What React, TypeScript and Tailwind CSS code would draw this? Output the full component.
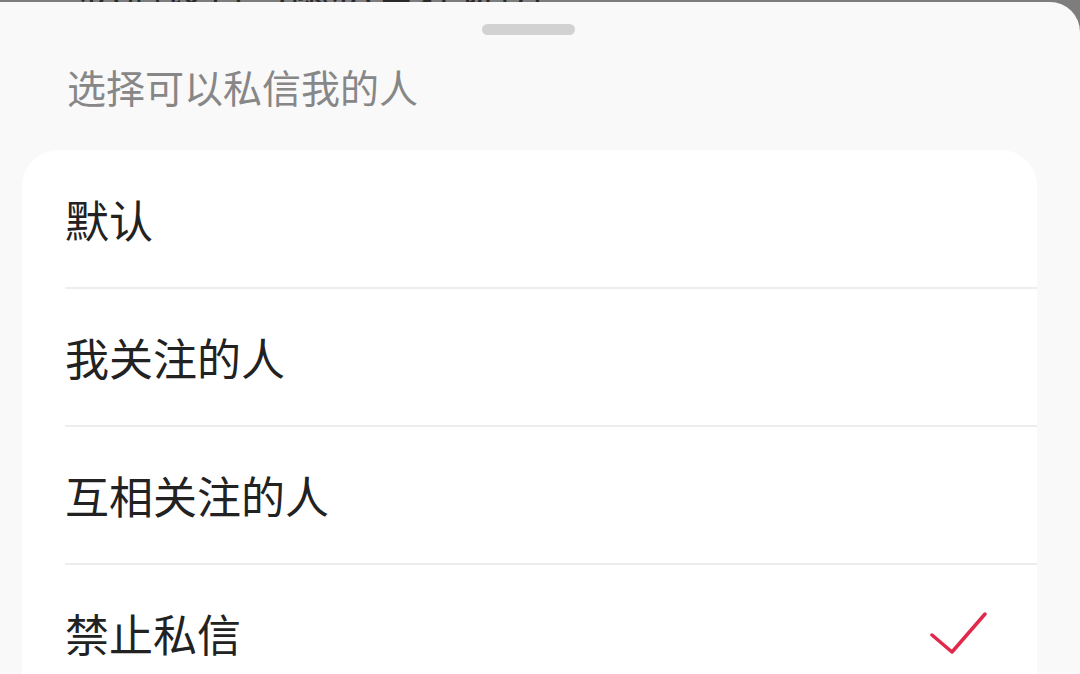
const options = ["默认", "我关注的人", "互相关注的人", "禁止私信"];

export default function App() {
  const selected = 3;

  return (
    <div
      className="h-[674px] w-[1080px] overflow-hidden bg-[#7d7d7d]"
      style={{ fontFamily: '"Noto Sans CJK SC", "Noto Sans", sans-serif' }}
    >
      {/* page behind the sheet, only the bottom edge of one line shows */}
      <div className="flex h-[2px] items-end overflow-hidden [clip-path:inset(0)]">
        <p className="-mb-[8px] ml-[80px] shrink-0 text-[42px] leading-[42px] text-[#2a2a2a]">
          私信设置与隐私管理说明
        </p>
      </div>

      <div className="flex min-h-[672px] flex-col rounded-tr-[30px] bg-[#f9f9f9]">
        <div className="ml-[482px] mt-[22px] h-[11px] w-[93px] shrink-0 rounded-full bg-[#d2d2d2]" />

        <h2 className="ml-[67px] mt-[26px] shrink-0 text-[39px] leading-[50px] text-[#878787]">
          选择可以私信我的人
        </h2>

        <div className="ml-[22px] mt-[39px] w-[1015px] flex-1 rounded-t-[36px] bg-white">
          {options.map((label, i) => (
            <div key={label} className="pl-[43px]">
              <div
                className={
                  i > 0
                    ? "flex h-[138px] items-center justify-between border-t-2 border-[#ededed] pr-[49px]"
                    : "flex h-[137px] items-center justify-between pr-[49px]"
                }
              >
                <span className="text-[44px] leading-[56px] text-[#222222]">{label}</span>
                {i === selected && (
                  <svg width="58" height="46" viewBox="0 0 58 46" fill="none">
                    <path
                      d="M2 25 L22 42 L55 4"
                      stroke="#e0294b"
                      strokeWidth="3.5"
                      strokeLinecap="round"
                      strokeLinejoin="round"
                    />
                  </svg>
                )}
              </div>
            </div>
          ))}
        </div>
      </div>
    </div>
  );
}
